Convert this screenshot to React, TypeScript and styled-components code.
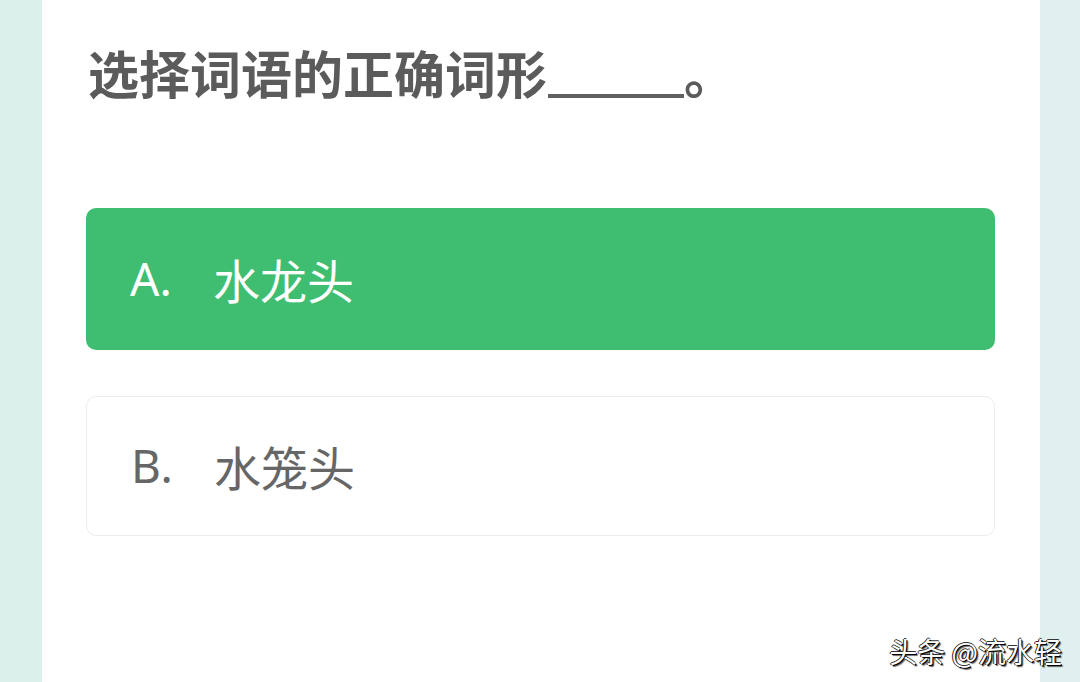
import React from "react";
import styled, { createGlobalStyle } from "styled-components";

const GlobalStyle = createGlobalStyle`
  html, body {
    margin: 0;
    padding: 0;
    width: 1080px;
    height: 682px;
    overflow: hidden;
  }
  body {
    font-family: "Noto Sans CJK SC", "Noto Sans", sans-serif;
  }
`;

const Page = styled.div`
  position: relative;
  width: 1080px;
  height: 682px;
  display: flex;
  background: linear-gradient(90deg, #dbefeb 0%, #e0f0ee 100%);
  padding: 0 40px 0 42px;
  box-sizing: border-box;
`;

const Card = styled.div`
  flex: 1;
  background: #ffffff;
  padding: 40px 45px 0 44px;
  display: flex;
  flex-direction: column;
`;

const Title = styled.h1`
  margin: 0 0 104px 2px;
  font-size: 51px;
  line-height: 64px;
  font-weight: 700;
  color: #5b5b5b;
  white-space: nowrap;
  display: flex;
  align-items: flex-end;
`;

const Blank = styled.span`
  display: inline-block;
  width: 136px;
  height: 4px;
  margin: 0 0 6px 1px;
  background: #606060;
`;

const Options = styled.div`
  display: flex;
  flex-direction: column;
  gap: 46px;
`;

const Option = styled.div<{ $selected?: boolean }>`
  height: ${(p) => (p.$selected ? "142px" : "140px")};
  box-sizing: border-box;
  border-radius: 10px;
  display: flex;
  align-items: center;
  padding: 0 0 2px 44px;
  background: ${(p) => (p.$selected ? "#3fbe72" : "#ffffff")};
  border: ${(p) => (p.$selected ? "none" : "1px solid #ececec")};
  color: ${(p) => (p.$selected ? "#ffffff" : "#666666")};
`;

const Letter = styled.span`
  width: 83px;
  font-family: "Noto Sans", "Liberation Sans", sans-serif;
  font-size: 46px;
`;

const Label = styled.span`
  font-size: 47px;
`;

const Watermark = styled.div`
  position: absolute;
  right: 18px;
  bottom: 14px;
  font-size: 28px;
  line-height: 34px;
  color: #ffffff;
  text-shadow: 1px 1px 0 #000, -1px 0 0 #222, 0 -1px 0 #333, 2px 2px 1px rgba(0, 0, 0, 0.6);
  white-space: nowrap;
`;

const options = [
  { key: "A.", text: "水龙头", selected: true },
  { key: "B.", text: "水笼头", selected: false },
];

export default function App() {
  return (
    <>
      <GlobalStyle />
      <Page>
        <Card>
          <Title>
            <span>选择词语的正确词形</span>
            <Blank />
            <span>。</span>
          </Title>
          <Options>
            {options.map((o) => (
              <Option key={o.key} $selected={o.selected}>
                <Letter>{o.key}</Letter>
                <Label>{o.text}</Label>
              </Option>
            ))}
          </Options>
        </Card>
        <Watermark>头条 @流水轻</Watermark>
      </Page>
    </>
  );
}
